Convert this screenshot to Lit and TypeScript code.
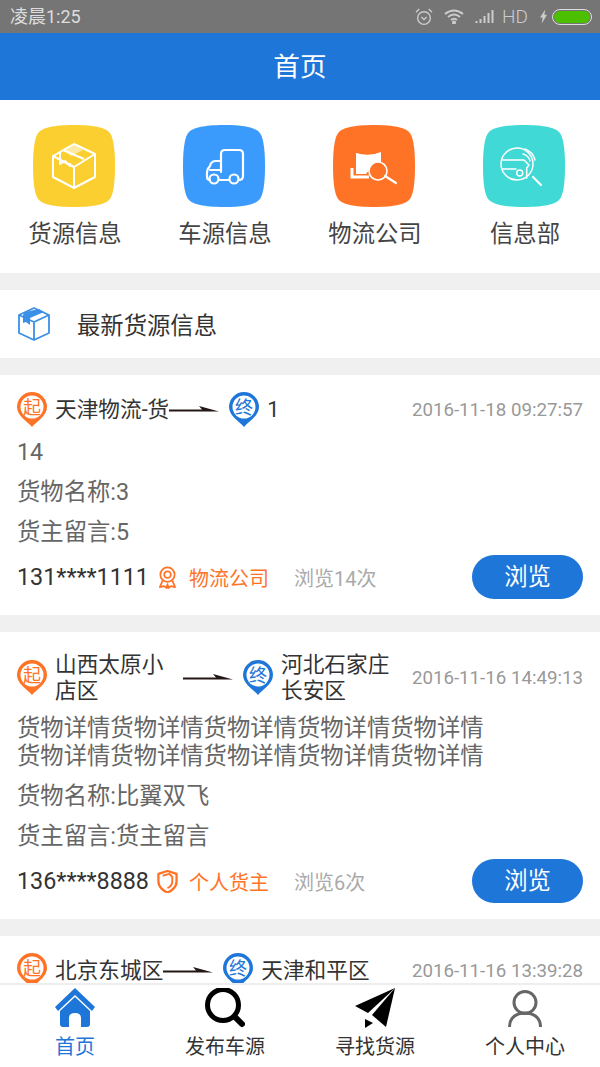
import { LitElement, html, css, svg } from "lit";
import { customElement } from "lit/decorators.js";

const squircle =
  "M41 0C62 0 72 3 76 7C80 11 82 22 82 41C82 60 80 71 76 75C72 79 62 82 41 82C20 82 10 79 6 75C2 71 0 60 0 41C0 22 2 11 6 7C10 3 20 0 41 0Z";

const navIcons = {
  box: svg`<g fill="none" stroke="#fff" stroke-width="2" stroke-linejoin="round">
      <path d="M41 19L62 29V52L41 63L20 52V31Z"/><path d="M20 31L41 42L62 29M41 42V63"/>
      <path d="M30 25L51 34M27 27V39L32 36L37 41V38"/></g>
      <path d="M30 24L40 19L50 25L38 31Z" fill="#fff" opacity=".55"/>`,
  truck: svg`<g fill="none" stroke="#fff" stroke-width="2.2" stroke-linecap="round" stroke-linejoin="round">
      <path d="M38 47V29Q38 25 42 25H56Q60 25 60 29V51Q60 55 56 55H57"/>
      <path d="M38 36H33Q28 36 27 41Q24 44 24 48V52Q24 55 27 55"/>
      <path d="M27 45H38M36 55H46"/>
      <circle cx="31" cy="54" r="4.5"/><circle cx="51" cy="54" r="4.5"/></g>`,
  search: svg`<path d="M23 28Q36 32 48 27V40H40L33 49H23Z" fill="#fff"/>
      <path d="M19 43V52H36" fill="none" stroke="#fff" stroke-width="3"/>
      <circle cx="45" cy="46" r="9" fill="#ff7327" stroke="#fff" stroke-width="1.6"/>
      <path d="M52 51L63 58" stroke="#fff" stroke-width="2.2" stroke-linecap="round"/>`,
  info: svg`<g fill="none" stroke="#fff" stroke-width="1.5" stroke-linecap="round" stroke-linejoin="round">
      <circle cx="34" cy="39" r="16"/><path d="M50 52L58 60" stroke-width="2.2"/>
      <path d="M19 35H41L46 40L43.700 43V53"/><path d="M19 44H33"/>
      <path d="M42 24Q50 27 52 35M40 29Q46 31 47 36"/>
      <circle cx="36.700" cy="48" r="3"/></g>`,
};

const nav = [
  { label: "货源信息", color: "#fbcf30", icon: navIcons.box },
  { label: "车源信息", color: "#3a9bfd", icon: navIcons.truck },
  { label: "物流公司", color: "#ff7327", icon: navIcons.search },
  { label: "信息部", color: "#41d9d6", icon: navIcons.info },
];

interface Goods {
  from: string;
  to: string;
  time: string;
  detail?: string;
  name?: string;
  note?: string;
  phone?: string;
  kind?: "company" | "owner";
  views?: number;
  single?: boolean;
}

const goods: Goods[] = [
  {
    from: "天津物流-货",
    to: "1",
    time: "2016-11-18 09:27:57",
    detail: "14",
    name: "3",
    note: "5",
    phone: "131****1111",
    kind: "company",
    views: 14,
    single: true,
  },
  {
    from: "山西太原小店区",
    to: "河北石家庄长安区",
    time: "2016-11-16 14:49:13",
    detail: "货物详情货物详情货物详情货物详情货物详情货物详情货物详情货物详情货物详情货物详情",
    name: "比翼双飞",
    note: "货主留言",
    phone: "136****8888",
    kind: "owner",
    views: 6,
  },
  {
    from: "北京东城区",
    to: "天津和平区",
    time: "2016-11-16 13:39:28",
    single: true,
  },
];

const pin = (char: string, color: string) => html`<svg class="pin" viewBox="0 0 30 35">
  <path d="M15 35C11 30 0 24 0 15A15 15 0 0 1 30 15C30 24 19 30 15 35Z" fill=${color} />
  <circle cx="15" cy="15" r="11.500" fill="#fff" />
  <text x="15" y="21.500" text-anchor="middle" font-size="18" fill=${color} font-family="Noto Sans CJK SC">${char}</text>
</svg>`;

const arrow = html`<svg class="arrow" viewBox="0 0 50 10">
  <path d="M0 4.500H33L30 1L50 6.500H0Z" fill="#231815" />
</svg>`;

const kindIcon = {
  company: html`<svg class="kind" viewBox="0 0 22 24" fill="none" stroke="#ff7327" stroke-width="1.8">
    <circle cx="11" cy="9" r="7.500" /><circle cx="11" cy="9" r="3.500" />
    <path d="M6 15L3 22L7.500 21L10 23L11 19L12 23L14.500 21L19 22L16 15" stroke-linejoin="round" />
  </svg>`,
  owner: html`<svg class="kind" viewBox="0 0 22 24" fill="none" stroke="#ff7327" stroke-linejoin="round">
    <path d="M11 1L20.500 4V12C20.500 18 15 22 11 23.500C7 22 1.500 18 1.500 12V4Z" stroke-width="2.400" />
    <path d="M6 6L13 4L16 7V12C16 16 13 18 11 19" stroke-width="2" />
  </svg>`,
};

@customElement("app-root")
export class AppRoot extends LitElement {
  static styles = css`
    :host {
      display: flex;
      flex-direction: column;
      height: 1067px;
      background: #f0f0f0;
      font-family: Roboto, "Noto Sans CJK SC", sans-serif;
      color: #333;
    }
    .status {
      flex: none;
      height: 33px;
      padding: 0 8px 0 10px;
      background: #757575;
      color: #ddd;
      font-size: 18px;
      line-height: 34px;
      display: flex;
      justify-content: space-between;
      align-items: center;
    }
    .status-icons {
      display: flex;
      align-items: center;
      color: #ccc;
      font-weight: 300;
    }
    .status-icons svg {
      flex: none;
    }
    .s-alarm,
    .s-wifi {
      margin-right: 11px;
    }
    .s-signal {
      margin-right: 7px;
    }
    .hd {
      width: 26px;
      margin-right: 12px;
      font-size: 19px;
    }
    .s-bolt {
      margin-right: 5px;
    }
    .battery {
      flex: none;
      width: 40px;
      height: 16px;
      box-sizing: border-box;
      border: 1px solid #ddd;
      border-radius: 8px;
      padding: 1px;
    }
    .battery i {
      display: block;
      height: 100%;
      border-radius: 6px;
      background: #4cc000;
    }
    .header {
      flex: none;
      height: 67px;
      box-sizing: border-box;
      padding-top: 2px;
      background: #1e76d9;
      color: #fff;
      font-size: 26.67px;
      line-height: 65px;
      text-align: center;
    }
    .main {
      flex: 1;
      min-height: 0;
      overflow: hidden;
    }
    .nav {
      display: grid;
      grid-template-columns: repeat(4, 150px);
      padding: 25px 0 24px;
      background: #fff;
    }
    .nav-item {
      display: flex;
      flex-direction: column;
      align-items: center;
      color: #444;
      font-size: 23.33px;
      line-height: 30px;
    }
    .nav-item svg {
      width: 82px;
      height: 82px;
      margin: 0 2px 12px 0;
    }
    .section {
      margin-top: 17px;
      height: 68px;
      padding-left: 18px;
      background: #fff;
      display: flex;
      align-items: center;
      font-size: 23.33px;
    }
    .section svg {
      width: 32px;
      height: 34px;
      margin-right: 27px;
    }
    .card {
      margin-top: 17px;
      padding: 17px 17px 16px;
      background: #fff;
    }
    .route {
      display: flex;
      align-items: center;
      min-height: 57px;
      margin-bottom: 8px;
      color: #333;
      font-size: 21.67px;
      line-height: 26px;
    }
    .route.single {
      min-height: 35px;
      margin-bottom: 11px;
    }
    .pin {
      flex: none;
      width: 30px;
      height: 35px;
      margin-right: 8px;
    }
    .place {
      max-width: 128px;
    }
    .arrow {
      flex: none;
      width: 50px;
      height: 10px;
      margin-right: 10px;
    }
    .time {
      margin-left: auto;
      color: #999;
      font-size: 18.7px;
      white-space: nowrap;
    }
    .line {
      max-width: 480px;
      margin-bottom: 12px;
      color: #666;
      font-size: 23.33px;
      line-height: 28px;
    }
    .foot {
      display: flex;
      align-items: center;
      height: 44px;
      margin-top: -3px;
    }
    .phone {
      flex: none;
      width: 140px;
      font-size: 23.33px;
    }
    .kind {
      flex: none;
      width: 21px;
      height: 23px;
      margin-right: 11px;
    }
    .kind-name {
      flex: none;
      width: 105px;
      color: #ff7327;
      font-size: 20px;
    }
    .views {
      color: #aaa;
      font-size: 20px;
    }
    .browse {
      margin-left: auto;
      width: 111px;
      height: 44px;
      border-radius: 22px;
      background: #1e76d9;
      color: #fff;
      font-size: 23.33px;
      line-height: 44px;
      text-align: center;
    }
    .tabs {
      flex: none;
      height: 84px;
      box-sizing: border-box;
      border-top: 2px solid #eee;
      background: #fff;
      display: grid;
      grid-template-columns: repeat(4, 150px);
    }
    .tab {
      display: flex;
      flex-direction: column;
      align-items: center;
      padding-top: 3px;
      color: #333;
      font-size: 20px;
      line-height: 28px;
    }
    .tab svg {
      width: 40px;
      height: 40px;
      margin-bottom: 5px;
    }
    .tab.active {
      color: #1e76d9;
    }
  `;

  renderStatus() {
    return html`<div class="status">
      <span>凌晨1:25</span>
      <div class="status-icons">
        <svg class="s-alarm" width="18" height="18" viewBox="0 0 17 17" fill="none" stroke="#ccc" stroke-width="1.300">
          <circle cx="8.500" cy="9.500" r="6" /><path d="M6 8.500L8.500 11L11 8.500M1 4L4 1M16 4L13 1" />
        </svg>
        <svg class="s-wifi" width="20" height="15" viewBox="0 0 20 15" fill="none" stroke="#ccc" stroke-width="2">
          <path d="M1 5Q10 -2 19 5M4 8Q10 3 16 8M7 11Q10 8.500 13 11" /><circle cx="10" cy="13.500" r="1" fill="#ccc" />
        </svg>
        <svg class="s-signal" width="20" height="15" viewBox="0 0 19 15" fill="#ccc">
          <path d="M0 12h2v2H0zM4 10h2v4H4zM8 7h2v7H8zM12 4h2v10h-2zM16 1h2v13h-2z" />
        </svg>
        <span class="hd">HD</span>
        <svg class="s-bolt" width="7" height="17" viewBox="0 0 8 16" fill="#ccc"><path d="M6 0L0 9H3L2 16L8 6H5Z" /></svg>
        <div class="battery"><i></i></div>
      </div>
    </div>`;
  }

  renderCard(g: Goods) {
    return html`<div class="card">
      <div class="route ${g.single ? "single" : ""}">
        ${pin("起", "#ff7327")}
        <div class="place">${g.from}</div>
        ${arrow} ${pin("终", "#1e76d9")}
        <div class="place">${g.to}</div>
        <div class="time">${g.time}</div>
      </div>
      ${g.detail ? html`<div class="line">${g.detail}</div>` : ""}
      ${g.name
        ? html`<div class="line">货物名称:${g.name}</div>
            <div class="line">货主留言:${g.note}</div>
            <div class="foot">
              <div class="phone">${g.phone}</div>
              ${kindIcon[g.kind!]}
              <div class="kind-name">${g.kind === "company" ? "物流公司" : "个人货主"}</div>
              <div class="views">浏览${g.views}次</div>
              <div class="browse">浏览</div>
            </div>`
        : ""}
    </div>`;
  }

  render() {
    return html`${this.renderStatus()}
      <div class="header">首页</div>
      <div class="main">
        <div class="nav">
          ${nav.map(
            (n) => html`<div class="nav-item">
              <svg viewBox="0 0 82 82"><path d=${squircle} fill=${n.color} />${n.icon}</svg>
              ${n.label}
            </div>`,
          )}
        </div>
        <div class="section">
          <svg viewBox="0 0 32 34" fill="none" stroke="#3a8fe6" stroke-width="1.800" stroke-linejoin="round">
            <path d="M16 1L31 8V26L16 33L1 26V8Z" /><path d="M1 8L16 15L31 8M16 15V33" />
            <path d="M7 5L21 2L26 5L12 11V18L8 15L5 16V8Z" fill="#3a8fe6" stroke="none" />
          </svg>
          最新货源信息
        </div>
        ${goods.map((g) => this.renderCard(g))}
      </div>
      <div class="tabs">
        <div class="tab active">
          <svg viewBox="0 0 40 40">
            <path d="M20 0L40 19L37 23L20 7L3 23L0 19Z" fill="#1e76d9" />
            <path d="M5 23L20 9L35 23V36Q35 39 32 39H26V30Q26 25 20 25Q14 25 14 30V39H8Q5 39 5 36Z" fill="#1e76d9" />
          </svg>
          首页
        </div>
        <div class="tab">
          <svg viewBox="0 0 40 40" fill="none" stroke="#000">
            <circle cx="18" cy="17" r="15.500" stroke-width="5" />
            <path d="M30 29L37 36" stroke-width="6" stroke-linecap="round" />
          </svg>
          发布车源
        </div>
        <div class="tab">
          <svg viewBox="0 0 40 40" fill="#000">
            <path d="M40 0L0 18L13 25Z" />
            <path d="M40 0L17 27L31 39Z" />
            <path d="M10 31V40L18 35Z" />
          </svg>
          寻找货源
        </div>
        <div class="tab">
          <svg viewBox="0 0 40 40" fill="none" stroke="#666" stroke-width="3">
            <circle cx="20" cy="14.500" r="11" />
            <path d="M4.500 39C4.500 29 12 25 20 25C28 25 35.500 29 35.500 39" />
          </svg>
          个人中心
        </div>
      </div>`;
  }
}
